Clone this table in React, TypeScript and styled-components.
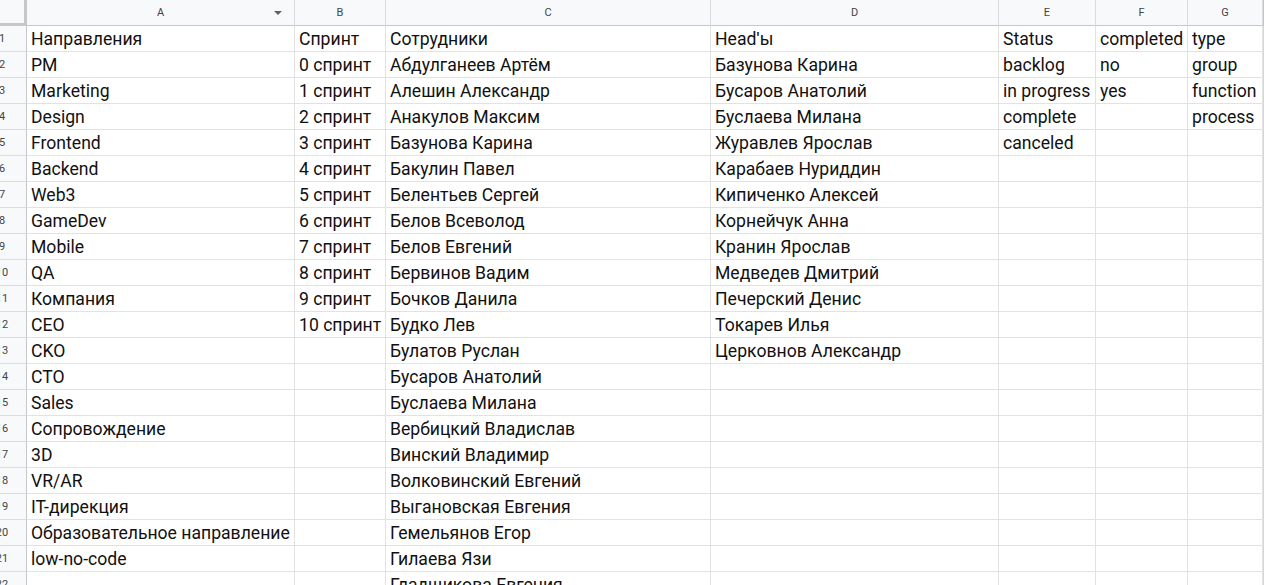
import React from 'react';
import styled, { createGlobalStyle } from 'styled-components';

const GlobalStyle = createGlobalStyle`
  html, body {
    margin: 0;
    padding: 0;
    background: #fff;
    overflow: hidden;
  }
`

const COLS = [
  { letter: 'A', width: 268, filter: true },
  { letter: 'B', width: 91 },
  { letter: 'C', width: 325 },
  { letter: 'D', width: 288 },
  { letter: 'E', width: 97 },
  { letter: 'F', width: 92 },
  { letter: 'G', width: 75 },
]

const colA = ['Направления', 'PM', 'Marketing', 'Design', 'Frontend', 'Backend', 'Web3', 'GameDev', 'Mobile', 'QA', 'Компания', 'CEO', 'CKO', 'CTO', 'Sales', 'Сопровождение', '3D', 'VR/AR', 'IT-дирекция', 'Образовательное направление', 'low-no-code']
const colB = ['Спринт', '0 спринт', '1 спринт', '2 спринт', '3 спринт', '4 спринт', '5 спринт', '6 спринт', '7 спринт', '8 спринт', '9 спринт', '10 спринт']
const colC = ['Сотрудники', 'Абдулганеев Артём', 'Алешин Александр', 'Анакулов Максим', 'Базунова Карина', 'Бакулин Павел', 'Белентьев Сергей', 'Белов Всеволод', 'Белов Евгений', 'Бервинов Вадим', 'Бочков Данила', 'Будко Лев', 'Булатов Руслан', 'Бусаров Анатолий', 'Буслаева Милана', 'Вербицкий Владислав', 'Винский Владимир', 'Волковинский Евгений', 'Выгановская Евгения', 'Гемельянов Егор', 'Гилаева Язи', 'Гладщикова Евгения']
const colD = ['Head\u02B9ы', 'Базунова Карина', 'Бусаров Анатолий', 'Буслаева Милана', 'Журавлев Ярослав', 'Карабаев Нуриддин', 'Кипиченко Алексей', 'Корнейчук Анна', 'Кранин Ярослав', 'Медведев Дмитрий', 'Печерский Денис', 'Токарев Илья', 'Церковнов Александр']
const colE = ['Status', 'backlog', 'in progress', 'complete', 'canceled']
const colF = ['completed', 'no', 'yes']
const colG = ['type', 'group', 'function', 'process']

const data = [colA, colB, colC, colD, colE, colF, colG]
const ROW_COUNT = 22

const Viewport = styled.div`
  width: 1264px;
  height: 585px;
  overflow: hidden;
`

// the row-number column is scrolled partly out of view, as in the sheet
const Sheet = styled.div`
  display: grid;
  grid-template-columns: 49px ${COLS.map(c => `${c.width}px`).join(' ')} 40px;
  grid-auto-rows: 26px;
  margin-left: -22px;
  font-family: Roboto, "Liberation Sans", Arial, sans-serif;
`

const Corner = styled.div`
  background: #f8f9fa;
  box-sizing: border-box;
  border-right: 3px solid #c7c7c7;
  border-bottom: 3px solid #c7c7c7;
`

const ColHeader = styled.div`
  position: relative;
  box-sizing: border-box;
  background: #f8f9fa;
  border-right: 1px solid #dadce0;
  border-bottom: 1px solid #c7c7c7;
  display: flex;
  align-items: center;
  justify-content: center;
  font-size: 11px;
  color: #444;
  padding-bottom: 1px;
`

const EdgeHeader = styled(ColHeader)`
  border-left: 1px solid #b9c6dc;
  border-right: none;
`

const FilterArrow = styled.span`
  position: absolute;
  right: 12px;
  top: 11px;
  width: 0;
  height: 0;
  border-left: 4px solid transparent;
  border-right: 4px solid transparent;
  border-top: 4px solid #5f6368;
`

const RowHeader = styled.div`
  box-sizing: border-box;
  background: #f8f9fa;
  border-right: 1px solid #c7c7c7;
  border-bottom: 1px solid #dadce0;
  display: flex;
  align-items: center;
  justify-content: center;
  font-size: 11px;
  color: #444;
`

const Cell = styled.div`
  box-sizing: border-box;
  border-right: 1px solid #e2e2e2;
  border-bottom: 1px solid #e2e2e2;
  padding: 1px 4px 0 4px;
  font-size: 17.6px;
  line-height: 25px;
  color: #111;
  white-space: nowrap;
  overflow: visible;
`

const EdgeCell = styled(Cell)`
  border-left: 1px solid #d6d6d6;
  border-right: none;
`

export default function App() {
  const rows = []
  for (let r = 0; r < ROW_COUNT; r++) {
    rows.push(
      <React.Fragment key={r}>
        <RowHeader>{r + 1}</RowHeader>
        {data.map((col, c) => (
          <Cell key={c}>{col[r] ?? ''}</Cell>
        ))}
        <EdgeCell />
      </React.Fragment>
    )
  }

  return (
    <Viewport>
      <GlobalStyle />
      <Sheet>
        <Corner />
        {COLS.map(col => (
          <ColHeader key={col.letter}>
            {col.letter}
            {col.filter && <FilterArrow />}
          </ColHeader>
        ))}
        <EdgeHeader />
        {rows}
      </Sheet>
    </Viewport>
  )
}
